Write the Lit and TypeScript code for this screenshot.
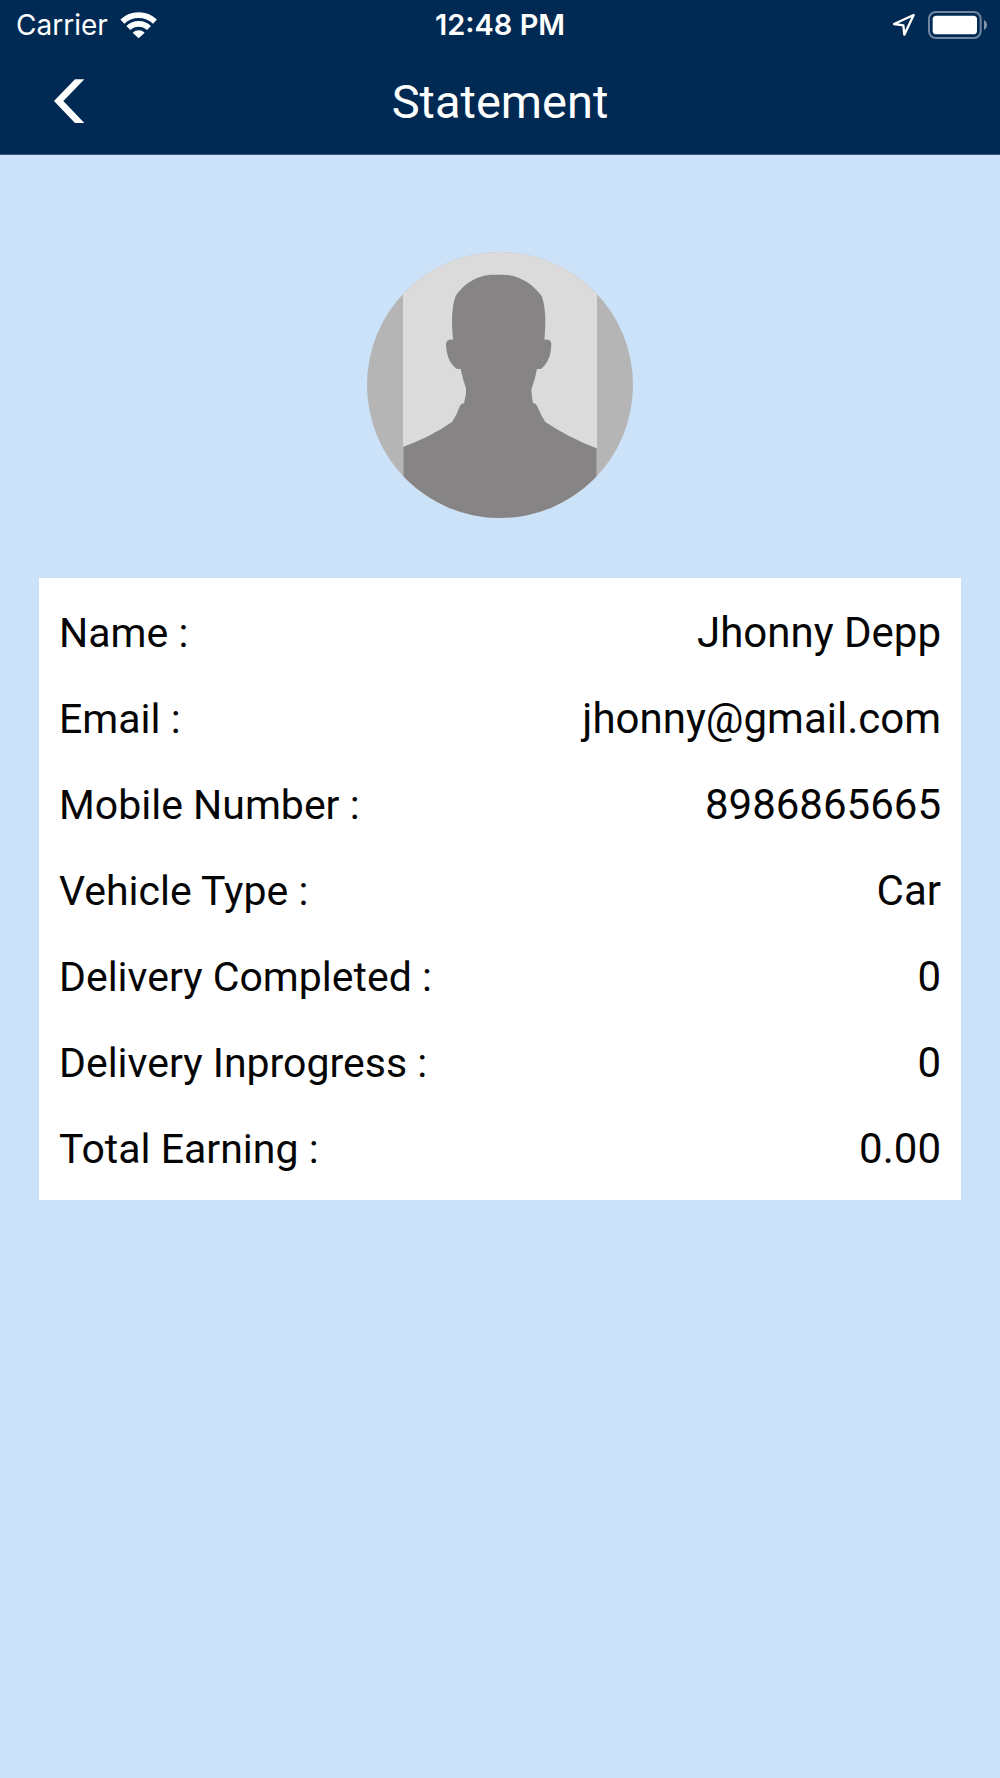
import { LitElement, html, css } from "lit";
import { customElement, property } from "lit/decorators.js";

interface Detail {
  label: string;
  value: string;
}

@customElement("status-bar")
class StatusBar extends LitElement {
  static styles = css`
    :host {
      display: grid;
      grid-template-columns: 1fr auto 1fr;
      align-items: center;
      height: 50px;
      color: #fff;
      font-family: Inter, "Liberation Sans", sans-serif;
      font-size: 28px;
      line-height: 32px;
    }
    .side {
      display: flex;
      align-items: center;
      gap: 12px;
    }
    .start {
      padding-left: 16px;
    }
    .end {
      justify-content: flex-end;
      padding-right: 12px;
    }
    .time {
      font-size: 29px;
      font-weight: 600;
    }
    svg {
      display: block;
    }
  `;

  render() {
    return html`
      <div class="side start">
        <span>Carrier</span>
        <svg width="37" height="28" viewBox="360 29 111 84" aria-label="Wi-Fi" role="img">
          <g fill="none" stroke="#fff">
            <path d="M367 61A71 71 0 0 1 465 61" stroke-width="17" />
            <path d="M385 80A45 45 0 0 1 447 80" stroke-width="17" />
          </g>
          <path d="M398 94A26 26 0 0 1 434 94L416 111Z" fill="#fff" />
        </svg>
      </div>
      <span class="time">12:48 PM</span>
      <div class="side end">
        <svg width="24" height="24" viewBox="97 40 72 72" aria-label="Location" role="img">
          <path d="M162 46L103 73L131 77L134 105Z" fill="none" stroke="#fff" stroke-width="7" stroke-linejoin="round" />
        </svg>
        <svg width="60" height="28" viewBox="204 30 180 84" aria-label="Battery" role="img">
          <rect x="207" y="33" width="155" height="78" rx="20" fill="none" stroke="#6e86a0" stroke-width="6" />
          <rect x="218" y="44" width="133" height="56" rx="11" fill="#fff" />
          <path d="M372 57Q381 62 381 72Q381 82 372 87Z" fill="#8094aa" />
        </svg>
      </div>
    `;
  }
}

@customElement("profile-avatar")
class ProfileAvatar extends LitElement {
  static styles = css`
    :host {
      display: block;
    }
    svg {
      display: block;
      width: 266px;
      height: 266px;
      border-radius: 50%;
    }
  `;

  render() {
    return html`
      <svg viewBox="21 36 798 798" role="img" aria-label="Profile photo">
        <rect x="21" y="36" width="798" height="798" fill="#b5b5b5" />
        <rect x="129" y="36" width="582" height="798" fill="#dbdbdb" />
        <path
          fill="#868484"
          d="M130 834V620Q210 592 276 546Q290 525 300 497Q305 490 312 490
             Q315 474 318 462V445Q308 417 302 387L289 386Q278 378 269 362
             Q259 342 258 312Q260 297 279 299Q276 272 276 240Q277 193 287 168
             C309 134 350 104 400 104H430C480 104 522 136 545 168
             Q554 190 556 235Q556 272 553 299Q573 297 574 312
             Q573 345 563 362Q555 378 544 386L531 387Q526 415 514 449
             Q515 470 519 489Q527 490 531 497Q543 526 556 546
             Q624 592 710 625V834Z"
        />
      </svg>
    `;
  }
}

@customElement("detail-card")
class DetailCard extends LitElement {
  @property({ attribute: false }) details: Detail[] = [];

  static styles = css`
    :host {
      display: block;
    }
    .list {
      margin: 0;
      padding: 12px 20px 8px;
      background: #fff;
      color: #050505;
      font-size: 41px;
      line-height: 86px;
    }
    .row {
      display: flex;
      justify-content: space-between;
      gap: 24px;
    }
    dd {
      margin: 0;
      font-size: 42px;
      text-align: right;
    }
  `;

  render() {
    return html`
      <dl class="list">
        ${this.details.map(
          (d) => html`<div class="row"><dt>${d.label} :</dt><dd>${d.value}</dd></div>`
        )}
      </dl>
    `;
  }
}

@customElement("app-root")
class AppRoot extends LitElement {
  private details: Detail[] = [
    { label: "Name", value: "Jhonny Depp" },
    { label: "Email", value: "jhonny@gmail.com" },
    { label: "Mobile Number", value: "8986865665" },
    { label: "Vehicle Type", value: "Car" },
    { label: "Delivery Completed", value: "0" },
    { label: "Delivery Inprogress", value: "0" },
    { label: "Total Earning", value: "0.00" },
  ];

  static styles = css`
    :host {
      display: block;
      min-height: 100vh;
      background: #cce2f9;
      font-family: Roboto, "Liberation Sans", sans-serif;
    }
    .top {
      background: #002a53;
      color: #fff;
      border-bottom: 1px solid #37597d;
    }
    .nav {
      display: grid;
      grid-template-columns: 1fr auto 1fr;
      align-items: center;
      height: 104px;
      padding: 0 37px;
    }
    .back {
      display: flex;
      justify-self: start;
      padding: 14px 16px 16px;
      border: 0;
      background: none;
      cursor: pointer;
    }
    .title {
      margin: 0;
      font-size: 47px;
      line-height: 56px;
      font-weight: 400;
    }
    .content {
      display: flex;
      flex-direction: column;
      gap: 60px;
      padding: 97px 39px 60px;
    }
    .avatar {
      align-self: center;
    }
  `;

  render() {
    return html`
      <header class="top">
        <status-bar></status-bar>
        <nav class="nav">
          <button class="back" aria-label="Back">
            <svg width="32" height="44" viewBox="157 236 96 132">
              <path d="M223 237H251L188 302L251 368H223L160 302Z" fill="#fff" />
            </svg>
          </button>
          <h1 class="title">Statement</h1>
        </nav>
      </header>
      <main class="content">
        <profile-avatar class="avatar"></profile-avatar>
        <detail-card .details=${this.details}></detail-card>
      </main>
    `;
  }
}
